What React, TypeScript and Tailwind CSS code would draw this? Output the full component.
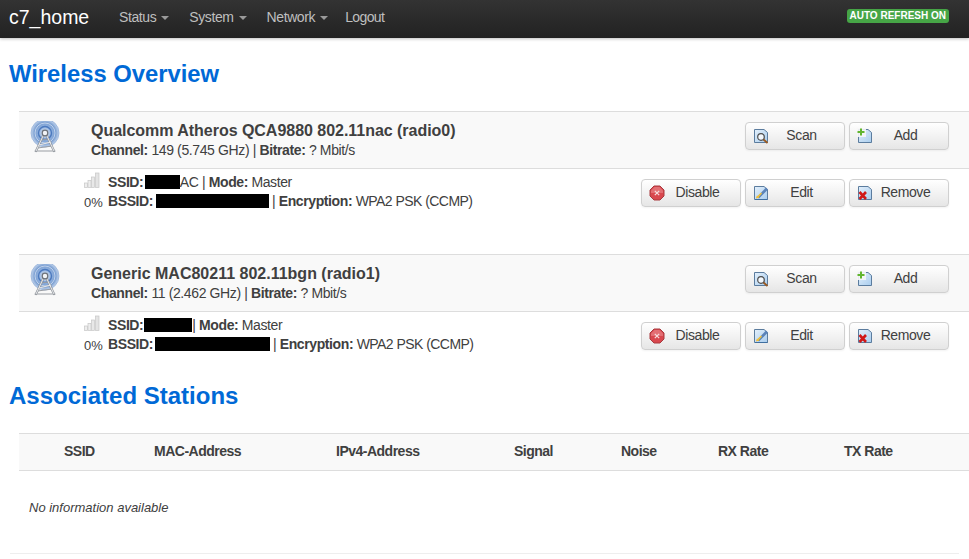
import React from "react";

const F = "font-['Liberation_Sans',Arial,sans-serif]";

function Caret() {
  return <span className="ml-[5px] inline-block h-0 w-0 border-x-[4px] border-t-[4px] border-x-transparent border-t-[#9a9a9a] align-middle" />;
}

function Tower() {
  return (
    <svg width="32" height="32" viewBox="0 0 32 32" className="block">
      <defs>
        <radialGradient id="tw" cx="50%" cy="50%" r="50%">
          <stop offset="0%" stopColor="#e4edf8" />
          <stop offset="45%" stopColor="#6f9ad6" />
          <stop offset="75%" stopColor="#4f80c4" />
          <stop offset="100%" stopColor="#b5cbea" />
        </radialGradient>
      </defs>
      <circle cx="15" cy="12" r="14" fill="url(#tw)" opacity="0.75" />
      <circle cx="15" cy="12" r="14" fill="none" stroke="#7e9fd0" strokeWidth="0.8" opacity="0.7" />
      <circle cx="15" cy="12" r="10" fill="none" stroke="#dbe6f5" strokeWidth="1" opacity="0.7" />
      <circle cx="15" cy="12" r="6.5" fill="none" stroke="#3f70b8" strokeWidth="1.4" opacity="0.85" />
      <path d="M13.5 14 L6 30 M16.5 14 L24 30" stroke="#8f949a" strokeWidth="2.2" fill="none" strokeLinecap="round" />
      <path d="M9 24 L21 21 M7.5 27 L22.5 25 M11.5 19 L18.5 18 M5 30 L25 30" stroke="#9a9ea4" strokeWidth="1.2" fill="none" strokeLinecap="round" />
      <path d="M13.5 14 L6 30 M16.5 14 L24 30 M9 24 L21 21" stroke="#f2f3f5" strokeWidth="0.9" fill="none" />
      <circle cx="15" cy="12" r="2.8" fill="#f1f3f6" stroke="#6d7178" strokeWidth="1.2" />
    </svg>
  );
}

function Signal() {
  return (
    <svg width="16" height="16" viewBox="0 0 16 16" className="block">
      <rect x="0.5" y="11" width="3" height="4.5" fill="#eee" stroke="#c6c6c6" strokeWidth="0.7" />
      <rect x="4" y="8.5" width="3" height="7" fill="#eee" stroke="#c6c6c6" strokeWidth="0.7" />
      <rect x="7.5" y="5" width="3" height="10.5" fill="#e8e8e8" stroke="#c6c6c6" strokeWidth="0.7" />
      <rect x="11.5" y="1" width="3.5" height="14.5" fill="#e4e4e4" stroke="#c6c6c6" strokeWidth="0.7" />
    </svg>
  );
}

function Doc({ children }: { children?: React.ReactNode }) {
  return (
    <svg width="16" height="16" viewBox="0 0 16 16" className="block">
      <defs>
        <linearGradient id="dc" x1="0" y1="0" x2="1" y2="1">
          <stop offset="0%" stopColor="#e4f0fb" />
          <stop offset="100%" stopColor="#a9cdee" />
        </linearGradient>
      </defs>
      <path d="M1.5 1.5 H11 L14.5 4.5 V14.5 H1.5 Z" fill="url(#dc)" stroke="#5b7c9e" strokeWidth="1" />
      {children}
    </svg>
  );
}

const icons: Record<string, React.ReactNode> = {
  Scan: (
    <Doc>
      <circle cx="8" cy="9" r="3.3" fill="#f3f8fd" stroke="#4d4d4d" strokeWidth="1.2" />
      <path d="M10.5 11.5 L14.5 15" stroke="#9a5a22" strokeWidth="1.8" />
    </Doc>
  ),
  Add: (
    <Doc>
      <rect x="0" y="0" width="9" height="9" fill="#f7f7f7" opacity="0.9" />
      <path d="M0.5 4 H7.5 M4 0.5 V7.5" stroke="#62b52f" strokeWidth="2" />
    </Doc>
  ),
  Edit: (
    <Doc>
      <path d="M2 14.5 H14.5" stroke="#3f6fa0" strokeWidth="1" />
      <path d="M4 12 L13 2.5 L15 4.5 L6 13.5 Z" fill="#5b83b8" />
      <path d="M3 13.5 L4 10.5 L6.5 12.5 Z" fill="#f0b428" />
      <path d="M3.5 12 L8 7.5 L9 8.5 L5 13 Z" fill="#f2c33c" />
    </Doc>
  ),
  Remove: (
    <Doc>
      <path d="M2.5 7 L9 14 M9 7 L2.5 14" stroke="#d01818" strokeWidth="2.6" />
    </Doc>
  ),
  Disable: (
    <svg width="16" height="16" viewBox="0 0 16 16" className="block">
      <path d="M5 1 H11 L15 5 V11 L11 15 H5 L1 11 V5 Z" fill="#d9484f" stroke="#a83a3f" strokeWidth="1" />
      <path d="M5.5 2 H10.5 L14 5.5 V8 H2 V5.5 Z" fill="#e98a8e" opacity="0.6" />
      <path d="M5.8 5.8 L10.2 10.2 M10.2 5.8 L5.8 10.2" stroke="#f6dede" strokeWidth="1.2" />
    </svg>
  ),
};

function Btn({ label }: { label: string }) {
  return (
    <div className="flex h-[28px] w-[100px] items-center rounded-[4px] border border-[#d0d0d0] bg-gradient-to-b from-white to-[#e6e6e6] pl-[7px] shadow-[0_1px_2px_rgba(0,0,0,0.05)]">
      {icons[label]}
      <span className="flex-1 pb-[2px] pr-[10px] text-center text-[14px] leading-[20px] tracking-[-0.4px] text-[#404040]">{label}</span>
    </div>
  );
}

function Black({ w, ml }: { w: number; ml: number }) {
  return <span className="inline-block h-[14px] bg-black align-[-2px]" style={{ width: w, marginLeft: ml }} />;
}

function Radio({ title, tracking, channel, ssid, bssid }: { title: string; tracking: string; channel: string; ssid: React.ReactNode; bssid: React.ReactNode }) {
  return (
    <div>
      <div className="flex h-[58px] items-center border-y border-[#dddddd] bg-[#f9f9f9] pr-[20px]">
        <div className="w-[72px] pb-[6px] pl-[11px]"><Tower /></div>
        <div className="flex-1">
          <div className={`text-[16px] font-bold leading-[20px] ${tracking}`}>{title}</div>
          <div className="mt-[-1px] text-[14px] leading-[20px] tracking-[-0.38px]"><b>Channel:</b> {channel} | <b>Bitrate:</b> ? Mbit/s</div>
        </div>
        <div className="flex gap-[4px] pb-[8px]"><Btn label="Scan" /><Btn label="Add" /></div>
      </div>
      <div className="flex h-[70px] items-start pr-[20px]">
        <div className="w-[89px] shrink-0 pl-[65px] pt-[3px]">
          <Signal />
          <div className="mt-[7px] text-[13px] leading-[15px]">0%</div>
        </div>
        <div className="flex-1 pt-[4px] text-[14px] leading-[19px] tracking-[-0.4px]">
          <div>{ssid}</div>
          <div>{bssid}</div>
        </div>
        <div className="flex gap-[4px] pt-[10px]"><Btn label="Disable" /><Btn label="Edit" /><Btn label="Remove" /></div>
      </div>
    </div>
  );
}

const wpa = <span className="tracking-[-0.55px]">WPA2 PSK (CCMP)</span>;

export default function App() {
  return (
    <div className={`${F} min-h-[559px] bg-white text-[#404040]`}>
      <div className="flex h-[38px] items-center bg-gradient-to-b from-[#333333] to-[#222222] pb-[4px] pl-[9px] pr-[20px] shadow-[0_1px_3px_rgba(0,0,0,0.25)]">
        <div className="w-[110px] text-[19.5px] leading-[20px] text-white">c7_home</div>
        <div className="flex gap-[20px] text-[14px] leading-[20px] tracking-[-0.4px] text-[#bfbfbf]">
          <span>Status<Caret /></span>
          <span>System<Caret /></span>
          <span className="mr-[-3px]">Network<Caret /></span>
          <span className="tracking-[-0.6px]">Logout</span>
        </div>
        <div className="mb-[2px] ml-auto rounded-[3px] bg-[#46a546] px-[3px] text-[10px] font-bold leading-[14px] text-white">AUTO REFRESH ON</div>
      </div>

      <div className="pl-[9px] pt-[22px]">
        <h2 className="text-[23.8px] font-bold leading-[28px] text-[#0069d6]">Wireless Overview</h2>
      </div>

      <div className="mt-[23px] pl-[19px]">
        <Radio
          title="Qualcomm Atheros QCA9880 802.11nac (radio0)"
          tracking="tracking-[-0.03px]"
          channel="149 (5.745 GHz)"
          ssid={<><b>SSID:</b> <Black w={35} ml={-2} />AC | <b>Mode:</b> Master</>}
          bssid={<><b>BSSID:</b> <Black w={113} ml={-1} /> | <b>Encryption:</b> {wpa}</>}
        />
        <div className="mt-[15px]">
          <Radio
            title="Generic MAC80211 802.11bgn (radio1)"
            tracking="tracking-normal"
            channel="11 (2.462 GHz)"
            ssid={<><b>SSID:</b><Black w={48} ml={1} />| <b>Mode:</b> Master</>}
            bssid={<><b>BSSID:</b> <Black w={115} ml={-2} /> | <b>Encryption:</b> {wpa}</>}
          />
        </div>
      </div>

      <div className="pl-[9px]">
        <h2 className="text-[24px] font-bold leading-[28px] text-[#0069d6]">Associated Stations</h2>
      </div>

      <div className="mt-[23px] pl-[19px]">
        <div className="flex h-[38px] items-center border-y border-[#dddddd] bg-[#f9f9f9] pb-[1px] pl-[45px] text-[14px] font-bold tracking-[-0.5px]">
          <div className="w-[90px]">SSID</div>
          <div className="w-[182px]">MAC-Address</div>
          <div className="w-[178px]">IPv4-Address</div>
          <div className="w-[107px]">Signal</div>
          <div className="w-[97px]">Noise</div>
          <div className="w-[126px]">RX Rate</div>
          <div>TX Rate</div>
        </div>
        <div className="pl-[10px] pt-[28px] text-[13px] italic leading-[18px]">No information available</div>
      </div>
      <div className="mx-[10px] mt-[36px] border-t border-[#eeeeee]" />
    </div>
  );
}
